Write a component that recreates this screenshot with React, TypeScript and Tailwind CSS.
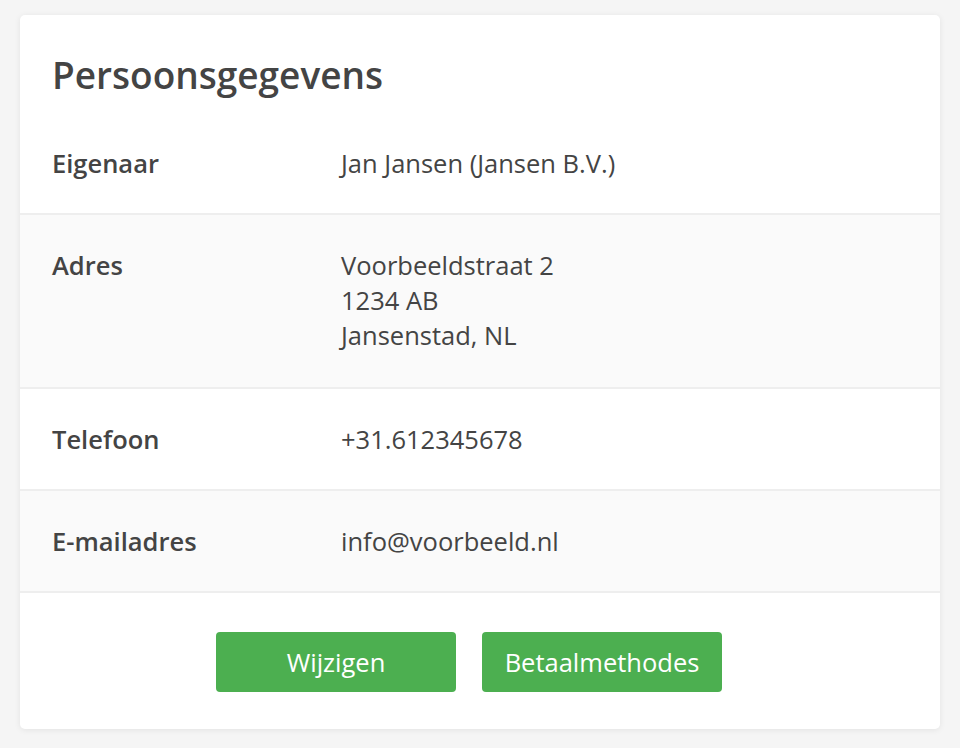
const rows: { label: string; lines: string[]; shaded: boolean }[] = [
  { label: "Eigenaar", lines: ["Jan Jansen (Jansen B.V.)"], shaded: false },
  { label: "Adres", lines: ["Voorbeeldstraat 2", "1234 AB", "Jansenstad, NL"], shaded: true },
  { label: "Telefoon", lines: ["+31.612345678"], shaded: false },
  { label: "E-mailadres", lines: ["info@voorbeeld.nl"], shaded: true },
];

export default function App() {
  return (
    <div
      className="min-h-[748px] bg-[#f5f5f5] px-[20px] pt-[15px] pb-[20px] text-[#444444]"
      style={{ fontFamily: '"Open Sans", "Noto Sans", sans-serif' }}
    >
      <div className="overflow-hidden rounded-[5px] bg-white shadow-[0_1px_6px_rgba(0,0,0,0.08)]">
        <h2 className="px-[32px] pt-[38px] pb-[16px] text-[37px] font-semibold leading-[44px]">
          Persoonsgegevens
        </h2>

        {rows.map((row, i) => (
          <div
            key={row.label}
            className={`flex px-[32px] pt-[33px] text-[25.5px] leading-[35px] ${
              row.lines.length > 1 ? "pb-[34px]" : "pb-[32px]"
            } ${row.shaded ? "bg-[#fafafa]" : "bg-white"} ${
              i > 0 ? "border-t-2 border-[#eeeeee]" : ""
            } ${i === rows.length - 1 ? "border-b-2 border-[#eeeeee]" : ""}`}
          >
            <div className="w-[289px] shrink-0 font-semibold">{row.label}</div>
            <div>
              {row.lines.map((line) => (
                <div key={line}>{line}</div>
              ))}
            </div>
          </div>
        ))}

        {/* Footer buttons */}
        <div className="flex justify-center gap-[26px] pt-[39px] pb-[37px] pr-[22px]">
          <button className="h-[60px] w-[240px] rounded-[4px] bg-[#4caf50] text-[25.5px] text-white">
            Wijzigen
          </button>
          <button className="h-[60px] w-[240px] rounded-[4px] bg-[#4caf50] text-[25.5px] text-white">
            Betaalmethodes
          </button>
        </div>
      </div>
    </div>
  );
}
